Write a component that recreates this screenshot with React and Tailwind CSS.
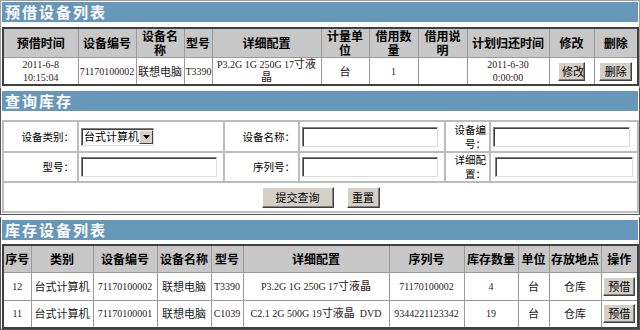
import React from "react";

const sans = "font-['Noto_Sans_CJK_SC',sans-serif]";

const Title = ({ children }) => (
  <div className="h-[20px] bg-[#6797b9] pl-[3px] text-[15px] leading-[20px] font-bold tracking-[2px] text-white font-['Noto_Sans_CJK_SC',sans-serif]">
    {children}
  </div>
);

const Btn = ({ children, className = "" }) => (
  <button
    className={
      "h-[19px] bg-[#d4d0c8] border border-t-white border-l-white border-r-[#404040] border-b-[#404040] shadow-[inset_-1px_-1px_0_#808080] text-[11px] leading-none px-[3px] text-black whitespace-nowrap font-['Noto_Sans_CJK_SC',sans-serif] " +
      className
    }
  >
    {children}
  </button>
);

const Input = ({ className = "" }) => (
  <input
    type="text"
    readOnly
    className={
      "block h-[20px] bg-white border border-t-[#808080] border-l-[#808080] border-b-[#dcdcdc] border-r-[#dcdcdc] shadow-[inset_1px_1px_0_#404040] outline-none " +
      className
    }
  />
);

const Th = ({ children }) => (
  <th className="border border-[#9a9a9a] bg-[#c8c8c8] px-px text-[12px] leading-[14px] font-bold text-black font-['Noto_Sans_CJK_SC',sans-serif]">
    {children}
  </th>
);

const Td = ({ children, cjk }) => (
  <td
    className={
      cjk
        ? "border border-[#9a9a9a] px-0 text-center text-[11px] leading-[13px] whitespace-nowrap text-[#1a1a1a] font-['Noto_Sans_CJK_SC',sans-serif]"
        : "border border-[#9a9a9a] px-px text-center text-[10px] leading-[13px] text-[#2a2020] font-['Liberation_Serif','Noto_Sans_CJK_SC',serif]"
    }
  >
    {children}
  </td>
);

const Label = ({ children }) => (
  <td className="border-2 border-[#bcbcbc] pr-[3px] text-right text-[10.5px] leading-[14px] text-black font-['Noto_Sans_CJK_SC',sans-serif]">
    {children}
  </td>
);

const Field = ({ children }) => (
  <td className="border-2 border-[#bcbcbc] pl-[2px]">{children}</td>
);

const stock = [
  {
    no: "12",
    kind: "台式计算机",
    code: "71170100002",
    name: "联想电脑",
    model: "T3390",
    spec: (
      <>
        P3.2G 1G 250G 17<span className="text-[11px]">寸液晶</span>
      </>
    ),
    serial: "71170100002",
    qty: "4",
  },
  {
    no: "11",
    kind: "台式计算机",
    code: "71170100001",
    name: "联想电脑",
    model: "C1039",
    spec: (
      <>
        C2.1 2G 500G 19<span className="text-[11px]">寸液晶</span>&nbsp; DVD
      </>
    ),
    serial: "9344221123342",
    qty: "19",
  },
];

export default function App() {
  return (
    <div className="w-[640px] h-[330px] overflow-hidden bg-white">
      {/* 预借设备列表 */}
      <div className="border-x border-t border-[#a0a0a0] px-px pt-px pb-[2px]">
        <Title>预借设备列表</Title>
        <table className="mt-[5px] w-[635px] table-fixed border-collapse border-2 border-[#404040]">
          <colgroup>
            <col className="w-[75px]" />
            <col className="w-[58px]" />
            <col className="w-[48px]" />
            <col className="w-[28px]" />
            <col className="w-[109px]" />
            <col className="w-[48px]" />
            <col className="w-[49px]" />
            <col className="w-[49px]" />
            <col className="w-[82px]" />
            <col className="w-[45px]" />
            <col className="w-[44px]" />
          </colgroup>
          <thead>
            <tr className="h-[27px]">
              <Th>预借时间</Th>
              <Th>设备编号</Th>
              <Th>
                设备名
                <br />称
              </Th>
              <Th>型号</Th>
              <Th>详细配置</Th>
              <Th>
                计量单
                <br />位
              </Th>
              <Th>
                借用数
                <br />量
              </Th>
              <Th>
                借用说
                <br />明
              </Th>
              <Th>计划归还时间</Th>
              <Th>修改</Th>
              <Th>删除</Th>
            </tr>
          </thead>
          <tbody>
            <tr className="h-[26px]">
              <Td>
                2011-6-8
                <br />
                10:15:04
              </Td>
              <Td>71170100002</Td>
              <Td cjk>联想电脑</Td>
              <Td>T3390</Td>
              <Td>
                P3.2G 1G 250G 17<span className="text-[11px]">寸液</span>
                <br />
                <span className="text-[11px]">晶</span>
              </Td>
              <Td cjk>台</Td>
              <Td>1</Td>
              <Td></Td>
              <Td>
                2011-6-30
                <br />
                0:00:00
              </Td>
              <Td>
                <Btn className="w-[27px]">修改</Btn>
              </Td>
              <Td>
                <Btn className="w-[33px]">删除</Btn>
              </Td>
            </tr>
          </tbody>
        </table>
      </div>

      {/* 查询库存 */}
      <div className="border-x border-b border-[#555555] px-px pt-[3px] pb-px">
        <Title>查询库存</Title>
        <table className="mt-[9px] w-[635px] table-fixed border-collapse">
          <colgroup>
            <col className="w-[75px]" />
            <col className="w-[146px]" />
            <col className="w-[75px]" />
            <col className="w-[146px]" />
            <col className="w-[45px]" />
            <col className="w-[148px]" />
          </colgroup>
          <tbody>
            <tr className="h-[31px]">
              <Label>设备类别：</Label>
              <Field>
                <div className="flex h-[18px] w-[73px] items-center border border-t-[#808080] border-l-[#808080] border-b-[#dcdcdc] border-r-[#dcdcdc] shadow-[inset_1px_1px_0_#404040] bg-white">
                  <span className={"flex-1 whitespace-nowrap pl-[2px] text-[11px] leading-none text-black " + sans}>
                    台式计算机
                  </span>
                  <span className="mr-px flex h-[14px] w-[14px] shrink-0 items-center justify-center border border-t-white border-l-white border-r-[#404040] border-b-[#404040] bg-[#d4d0c8]">
                    <svg width="7" height="4" viewBox="0 0 7 4">
                      <path d="M0 0h7L3.5 4z" fill="#000" />
                    </svg>
                  </span>
                </div>
              </Field>
              <Label>设备名称：</Label>
              <Field>
                <Input className="w-[136px]" />
              </Field>
              <Label>
                设备编
                <br />
                号：
              </Label>
              <Field>
                <Input className="w-[137px]" />
              </Field>
            </tr>
            <tr className="h-[30px]">
              <Label>型号：</Label>
              <Field>
                <Input className="w-[136px]" />
              </Field>
              <Label>序列号：</Label>
              <Field>
                <Input className="w-[136px]" />
              </Field>
              <Label>
                详细配
                <br />
                置：
              </Label>
              <Field>
                <Input className="ml-[2px] w-[138px]" />
              </Field>
            </tr>
            <tr className="h-[30px]">
              <td colSpan={6} className="border-2 border-[#bcbcbc]">
                <div className="flex justify-center gap-[13px]">
                  <Btn className="h-[21px] w-[72px]">提交查询</Btn>
                  <Btn className="h-[21px] w-[33px]">重置</Btn>
                </div>
              </td>
            </tr>
          </tbody>
        </table>
      </div>

      {/* 库存设备列表 */}
      <div className="mt-[2px] border-x border-b border-[#555555] px-px pt-[3px]">
        <Title>库存设备列表</Title>
        <table className="mt-[4px] w-[635px] table-fixed border-collapse border-2 border-[#404040]">
          <colgroup>
            <col className="w-[28px]" />
            <col className="w-[62px]" />
            <col className="w-[64px]" />
            <col className="w-[54px]" />
            <col className="w-[32px]" />
            <col className="w-[146px]" />
            <col className="w-[75px]" />
            <col className="w-[54px]" />
            <col className="w-[31px]" />
            <col className="w-[52px]" />
            <col className="w-[37px]" />
          </colgroup>
          <thead>
            <tr className="h-[27px]">
              <Th>序号</Th>
              <Th>类别</Th>
              <Th>设备编号</Th>
              <Th>设备名称</Th>
              <Th>型号</Th>
              <Th>详细配置</Th>
              <Th>序列号</Th>
              <Th>库存数量</Th>
              <Th>单位</Th>
              <Th>存放地点</Th>
              <Th>操作</Th>
            </tr>
          </thead>
          <tbody>
            {stock.map((s) => (
              <tr key={s.no} className="h-[28px]">
                <Td>{s.no}</Td>
                <Td cjk>{s.kind}</Td>
                <Td>{s.code}</Td>
                <Td cjk>{s.name}</Td>
                <Td>{s.model}</Td>
                <Td>{s.spec}</Td>
                <Td>{s.serial}</Td>
                <Td>{s.qty}</Td>
                <Td cjk>台</Td>
                <Td cjk>仓库</Td>
                <Td>
                  <Btn className="w-[32px]">预借</Btn>
                </Td>
              </tr>
            ))}
          </tbody>
        </table>
      </div>
    </div>
  );
}
